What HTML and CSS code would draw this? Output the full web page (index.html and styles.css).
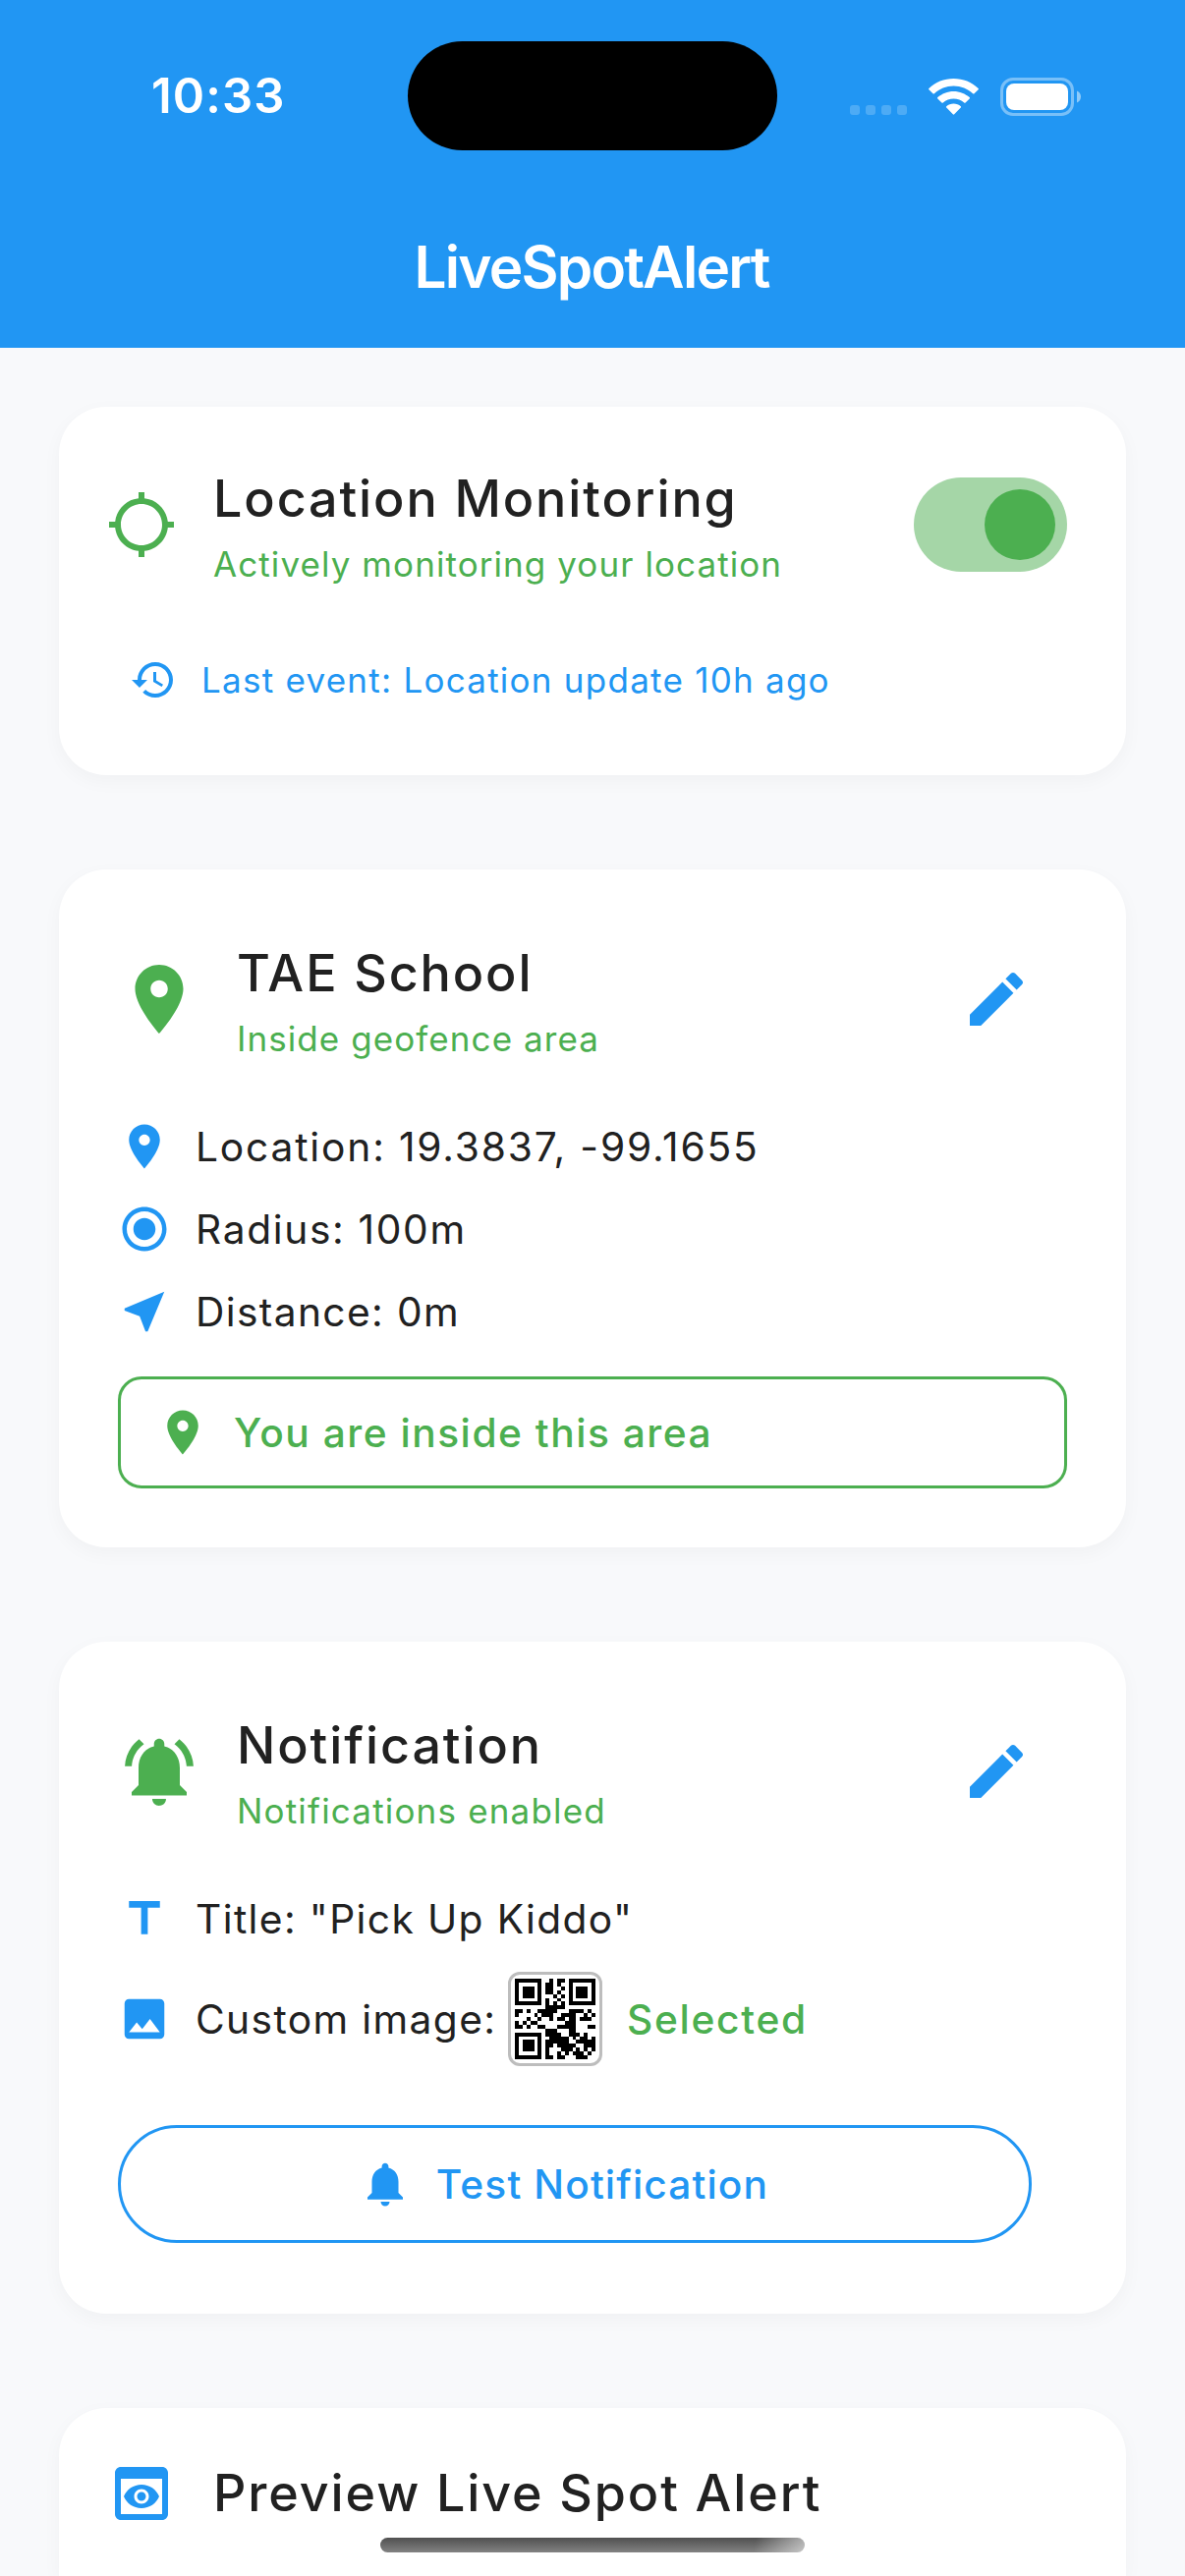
FILE: index.html
```
<!DOCTYPE html>
<html lang="en">
<head>
<meta charset="utf-8">
<title>LiveSpotAlert</title>
<link rel="stylesheet" href="styles.css">
</head>
<body>
<svg class="sprite" width="0" height="0">
  <symbol id="place" viewBox="0 0 24 24"><path d="M12 2C8.13 2 5 5.13 5 9c0 5.25 7 13 7 13s7-7.75 7-13c0-3.87-3.13-7-7-7zm0 9.5c-1.38 0-2.5-1.12-2.5-2.5s1.12-2.5 2.5-2.5 2.5 1.12 2.5 2.5-1.12 2.5-2.5 2.5z"/></symbol>
  <symbol id="edit" viewBox="0 0 24 24"><path d="M3 17.25V21h3.75L17.81 9.94l-3.75-3.75L3 17.25zM20.71 7.04c.39-.39.39-1.02 0-1.41l-2.34-2.34c-.39-.39-1.02-.39-1.41 0l-1.83 1.83 3.75 3.75 1.83-1.83z"/></symbol>
  <symbol id="finder" viewBox="0 0 7 7"><path fill-rule="evenodd" d="M0 0h7v7H0zM1 1v5h5V1zM2 2h3v3H2z"/></symbol>
</svg>

<header class="app-bar">
  <div class="status-bar">
    <div class="clock">10:33</div>
    <div class="island"></div>
    <div class="indicators">
      <svg class="signal" viewBox="0 0 58 39"><g fill="#fff" fill-opacity=".2"><rect y="28" width="10" height="10" rx="3"/><rect x="16" y="28" width="10" height="10" rx="3"/><rect x="32" y="28" width="10" height="10" rx="3"/><rect x="48" y="28" width="10" height="10" rx="3"/></g></svg>
      <svg class="wifi" viewBox="0 0 51 39"><g fill="#fff"><path d="M25.500 1C35.300 1 44 4.700 50.600 10.900Q51.300 11.600 50.600 12.300L46.500 16.300Q45.800 16.900 45.100 16.300C39.900 11.500 33 8.600 25.500 8.600S11.100 11.500 5.900 16.300Q5.200 16.900 4.500 16.300L.4 12.300Q-.3 11.600.4 10.900C7 4.700 15.700 1 25.500 1z"/><path d="M25.500 13.900C31.700 13.900 37.400 16.300 41.700 20.100Q42.400 20.800 41.700 21.500L37.600 25.500Q36.900 26.100 36.200 25.500C33.400 23 29.600 21.500 25.500 21.500S17.600 23 14.800 25.500Q14.100 26.100 13.400 25.500L9.300 21.500Q8.600 20.800 9.300 20.100C13.600 16.300 19.300 13.900 25.500 13.900z"/><path d="M25.500 26.600C28.300 26.600 30.800 27.600 32.800 29.200Q33.500 29.900 32.800 30.600L26.200 37.300Q25.500 38 24.800 37.300L18.200 30.600Q17.500 29.900 18.200 29.200C20.200 27.600 22.700 26.600 25.500 26.600z"/></g></svg>
      <svg class="battery" viewBox="0 0 82 39"><rect x="1.500" y="1.500" width="72" height="36" rx="11.500" fill="none" stroke="#fff" stroke-opacity=".4" stroke-width="3"/><rect x="6" y="6" width="63" height="27" rx="8" fill="#fff"/><path d="M78 13.500c2.400.9 4 3.200 4 6s-1.600 5.100-4 6z" fill="#fff" fill-opacity=".5"/></svg>
    </div>
  </div>
  <h1 class="app-title">LiveSpotAlert</h1>
</header>

<main class="cards">
  <section class="card card-monitor">
    <div class="head">
      <svg class="icon-l green" viewBox="0 0 24 24"><path d="M20.940 11c-.46-4.17-3.77-7.480-7.940-7.940V1h-2v2.060C6.830 3.520 3.520 6.830 3.060 11H1v2h2.060c.46 4.170 3.770 7.480 7.940 7.940V23h2v-2.060c4.170-.46 7.480-3.770 7.940-7.940H23v-2h-2.060zM12 19c-3.870 0-7-3.130-7-7s3.130-7 7-7 7 3.130 7 7-3.130 7-7 7z"/></svg>
      <div class="titles">
        <h2 class="title">Location Monitoring</h2>
        <p class="subtitle">Actively monitoring your location</p>
      </div>
      <div class="switch"><span class="thumb"></span></div>
    </div>
    <div class="event">
      <svg class="icon-s blue" viewBox="0 0 24 24"><path d="M13 3c-4.970 0-9 4.030-9 9H1l3.890 3.890.07.14L9 12H6c0-3.870 3.130-7 7-7s7 3.130 7 7-3.130 7-7 7c-1.930 0-3.680-.79-4.940-2.060l-1.420 1.420C8.270 19.990 10.510 21 13 21c4.970 0 9-4.030 9-9s-4.030-9-9-9zm-1 5v5l4.280 2.540.72-1.210-3.500-2.080V8H12z"/></svg>
      <span class="event-text">Last event: Location update 10h ago</span>
    </div>
  </section>

  <section class="card card-detail">
    <div class="head">
      <svg class="icon-xl green"><use href="#place"/></svg>
      <div class="titles">
        <h2 class="title">TAE School</h2>
        <p class="subtitle">Inside geofence area</p>
      </div>
      <svg class="icon-l blue edit"><use href="#edit"/></svg>
    </div>
    <div class="rows">
      <div class="row">
        <svg class="icon-m blue"><use href="#place"/></svg>
        <span class="loc">Location: 19.3837, -99.1655</span>
      </div>
      <div class="row">
        <svg class="icon-m blue" viewBox="0 0 24 24"><path d="M12 7c-2.760 0-5 2.240-5 5s2.240 5 5 5 5-2.240 5-5-2.240-5-5-5zm0-5C6.480 2 2 6.480 2 12s4.480 10 10 10 10-4.480 10-10S17.520 2 12 2zm0 18c-4.420 0-8-3.580-8-8s3.580-8 8-8 8 3.580 8 8-3.580 8-8 8z"/></svg>
        <span class="rad">Radius: 100m</span>
      </div>
      <div class="row">
        <svg class="icon-m blue" viewBox="0 0 24 24"><path d="M21 3L3 10.530v.98l6.840 2.650L12.480 21h.98L21 3z"/></svg>
        <span>Distance: 0m</span>
      </div>
    </div>
    <div class="inside">
      <svg class="icon-m green"><use href="#place"/></svg>
      <span>You are inside this area</span>
    </div>
  </section>

  <section class="card card-detail card-notify">
    <div class="head">
      <svg class="icon-xl green" viewBox="0 0 24 24"><path d="M7.580 4.080L6.150 2.650C3.750 4.480 2.170 7.300 2.030 10.500h2c.15-2.650 1.510-4.970 3.550-6.420zm12.390 6.420h2c-.15-3.200-1.730-6.020-4.120-7.850l-1.420 1.430c2.020 1.450 3.390 3.770 3.540 6.420zM18 11c0-3.070-1.640-5.640-4.500-6.320V4c0-.83-.67-1.500-1.500-1.500s-1.500.67-1.500 1.500v.68C7.630 5.360 6 7.920 6 11v5l-2 2v1h16v-1l-2-2v-5zm-6 11c.14 0 .27-.01.4-.04.65-.14 1.180-.58 1.440-1.180.1-.24.15-.5.15-.78h-4c.01 1.100.9 2 2.010 2z"/></svg>
      <div class="titles">
        <h2 class="title">Notification</h2>
        <p class="subtitle wide">Notifications enabled</p>
      </div>
      <svg class="icon-l blue edit"><use href="#edit"/></svg>
    </div>
    <div class="rows">
      <div class="row">
        <svg class="icon-m blue" viewBox="0 0 24 24"><path d="M5 4v3h5.500v12h3V7H19V4z"/></svg>
        <span>Title: "Pick Up Kiddo"</span>
      </div>
      <div class="row row-image">
        <svg class="icon-m blue" viewBox="0 0 24 24"><path d="M21 19V5c0-1.100-.9-2-2-2H5c-1.100 0-2 .9-2 2v14c0 1.100.9 2 2 2h14c1.100 0 2-.9 2-2zM8.500 13.500l2.500 3.010L14.500 12l4.500 6H5l3.500-4.500z"/></svg>
        <span class="custom">Custom image:</span>
        <div class="qr">
          <svg viewBox="0 0 21 21" shape-rendering="crispEdges">
            <use href="#finder" width="7" height="7"/><use href="#finder" x="14" width="7" height="7"/><use href="#finder" y="14" width="7" height="7"/>
            <path d="M9 0h1v1h-1zM11 0h2v1h-2zM8 1h2v1h-2zM11 1h1v1h-1zM8 2h2v1h-2zM12 2h1v1h-1zM8 3h2v1h-2zM11 3h1v1h-1zM10 4h1v1h-1zM12 4h1v1h-1zM8 5h1v1h-1zM11 5h1v1h-1zM8 6h1v1h-1zM10 6h1v1h-1zM12 6h1v1h-1zM8 7h3v1h-3zM11 7h2v1h-2zM0 8h2v1h-2zM3 8h1v1h-1zM6 8h5v1h-5zM14 8h4v1h-4zM19 8h1v1h-1zM0 9h1v1h-1zM5 9h1v1h-1zM7 9h3v1h-3zM12 9h4v1h-4zM18 9h1v1h-1zM20 9h1v1h-1zM3 10h1v1h-1zM6 10h1v1h-1zM9 10h1v1h-1zM11 10h2v1h-2zM14 10h2v1h-2zM17 10h3v1h-3zM0 11h1v1h-1zM2 11h1v1h-1zM4 11h2v1h-2zM13 11h3v1h-3zM0 12h2v1h-2zM3 12h1v1h-1zM6 12h2v1h-2zM11 12h5v1h-5zM19 12h2v1h-2zM8 13h3v1h-3zM14 13h2v1h-2zM8 14h4v1h-4zM14 14h3v1h-3zM18 14h1v1h-1zM9 15h5v1h-5zM15 15h1v1h-1zM17 15h2v1h-2zM20 15h1v1h-1zM8 16h6v1h-6zM16 16h5v1h-5zM8 17h2v1h-2zM11 17h5v1h-5zM18 17h3v1h-3zM8 18h1v1h-1zM12 18h3v1h-3zM16 18h1v1h-1zM18 18h1v1h-1zM20 18h1v1h-1zM8 19h1v1h-1zM11 19h1v1h-1zM13 19h1v1h-1zM15 19h3v1h-3zM19 19h1v1h-1zM8 20h2v1h-2zM11 20h2v1h-2zM16 20h3v1h-3z"/>
          </svg>
        </div>
        <span class="selected">Selected</span>
      </div>
    </div>
    <div class="test-button">
      <svg class="icon-m blue" viewBox="0 0 24 24"><path d="M12 22c1.100 0 2-.9 2-2h-4c0 1.100.89 2 2 2zm6-6v-5c0-3.070-1.640-5.640-4.500-6.320V4c0-.83-.67-1.500-1.500-1.500s-1.500.67-1.500 1.500v.68C7.630 5.360 6 7.920 6 11v5l-2 2v1h16v-1l-2-2z"/></svg>
      <span>Test Notification</span>
    </div>
  </section>

  <section class="card card-preview">
    <div class="head">
      <svg class="icon-l blue" viewBox="0 0 24 24"><path d="M19 3H5c-1.110 0-2 .9-2 2v14c0 1.100.89 2 2 2h14c1.100 0 2-.9 2-2V5c0-1.100-.89-2-2-2zm0 16H5V7h14v12zm-5.500-6c0 .83-.67 1.500-1.500 1.500s-1.500-.67-1.500-1.500.67-1.500 1.500-1.500 1.500.67 1.500 1.500zM12 9c-2.730 0-5.060 1.660-6 4 .94 2.340 3.270 4 6 4s5.060-1.660 6-4c-.94-2.340-3.270-4-6-4zm0 6.500c-1.380 0-2.500-1.120-2.500-2.500s1.120-2.500 2.500-2.500 2.500 1.120 2.500 2.500-1.120 2.500-2.500 2.500z"/></svg>
      <h2 class="title">Preview Live Spot Alert</h2>
    </div>
  </section>
</main>
<div class="home-indicator"></div>
</body>
</html>
```
FILE: styles.css
```
* { box-sizing: border-box; margin: 0; padding: 0; }
html, body { height: 2622px; overflow: hidden; }
body {
  position: relative;
  width: 1206px;
  background: #f8f9fb;
  color: #212121;
  font-family: "Inter", "Liberation Sans", sans-serif;
}
svg { display: block; flex: none; }
.sprite { position: absolute; }
h1, h2, span, .clock, p { white-space: nowrap; }

/* App bar */
.app-bar { height: 354px; background: #2196f3; color: #fff; }
.status-bar { display: grid; grid-template-columns: 415px 376px 415px; height: 196px; align-items: center; }
.clock { padding-left: 154px; font-size: 49px; font-weight: 600; line-height: 60px; letter-spacing: 1.1px; }
.island { height: 111px; margin-bottom: 2px; border-radius: 56px; background: #000; }
.indicators { display: flex; gap: 22px; padding-left: 74px; }
.signal { width: 58px; height: 39px; }
.wifi { width: 51px; height: 39px; }
.battery { width: 82px; height: 39px; }
.app-title { padding-right: 2px; font-size: 58.5px; font-weight: 600; line-height: 152px; letter-spacing: -1.8px; text-align: center; }

/* Cards */
.cards { display: flex; flex-direction: column; gap: 96px; padding: 60px 60px 0; }
.card { border-radius: 48px; background: #fff; box-shadow: 0 6px 20px rgba(0, 0, 0, .035); }
.head { display: flex; align-items: center; }
.titles { flex: 1; }
.title { font-size: 52px; font-weight: 500; line-height: 80px; letter-spacing: 1.91px; }
.subtitle { color: #4caf50; font-size: 35px; line-height: 52px; letter-spacing: 1.08px; }
.subtitle.wide { letter-spacing: 1.18px; }

.icon-s { width: 48px; height: 48px; }
.icon-m { width: 54px; height: 54px; }
.icon-l { width: 72px; height: 72px; }
.icon-xl { width: 84px; height: 84px; }
.green { fill: #4caf50; }
.blue { fill: #2196f3; }

.card-monitor { height: 375px; padding: 54px 60px 0 48px; }
.card-monitor .head { gap: 37px; }
.switch { display: flex; justify-content: flex-end; width: 156px; height: 96px; padding: 12px; border-radius: 48px; background: #a5d6a7; }
.thumb { width: 72px; height: 72px; border-radius: 50%; background: #4caf50; }
.event { display: flex; align-items: center; gap: 25px; margin-top: 68px; padding-left: 24px; color: #2196f3; }
.event-text { font-size: 35px; line-height: 48px; letter-spacing: 1.25px; }

.card-detail { padding: 66px 60px 60px; }
.card-detail .head { gap: 37px; }
.edit { margin-right: 36px; }
.rows { display: flex; flex-direction: column; gap: 24px; margin-top: 54px; font-size: 40.7px; line-height: 60px; letter-spacing: 1.38px; }
.row { display: flex; align-items: center; gap: 25px; height: 60px; }
.row span { padding-top: 1px; }
.loc { letter-spacing: 1.83px; }
.rad { letter-spacing: 1.66px; }
.inside { display: flex; align-items: center; gap: 25px; height: 114px; margin-top: 36px; padding-left: 36px; border: 3px solid #4caf50; border-radius: 24px; color: #4caf50; font-size: 40.7px; font-weight: 500; letter-spacing: 1.5px; }

.card-notify { padding-bottom: 72px; }
.row-image { height: 96px; }
.custom { width: 293px; }
.qr { width: 96px; height: 96px; padding: 4px; border: 3px solid #bdbdbd; border-radius: 12px; }
.qr svg { width: 82px; height: 82px; }
.selected { color: #4caf50; font-weight: 500; letter-spacing: 1.69px; }
.test-button { display: flex; align-items: center; justify-content: center; gap: 25px; width: 930px; height: 120px; margin-top: 60px; padding-right: 23px; border: 3px solid #2196f3; border-radius: 60px; color: #2196f3; font-size: 40.7px; font-weight: 500; letter-spacing: 1.12px; }

.card-preview { height: 171px; padding: 51px 48px 0; border-radius: 48px 48px 0 0; }
.card-preview .head { gap: 37px; height: 72px; }

.home-indicator {
  position: absolute;
  left: 387px;
  top: 2583px;
  width: 432px;
  height: 15px;
  border-radius: 8px;
  background: linear-gradient(100deg, transparent 88%, rgba(255, 255, 255, .55) 100%), linear-gradient(#505050, #828282);
}
```
